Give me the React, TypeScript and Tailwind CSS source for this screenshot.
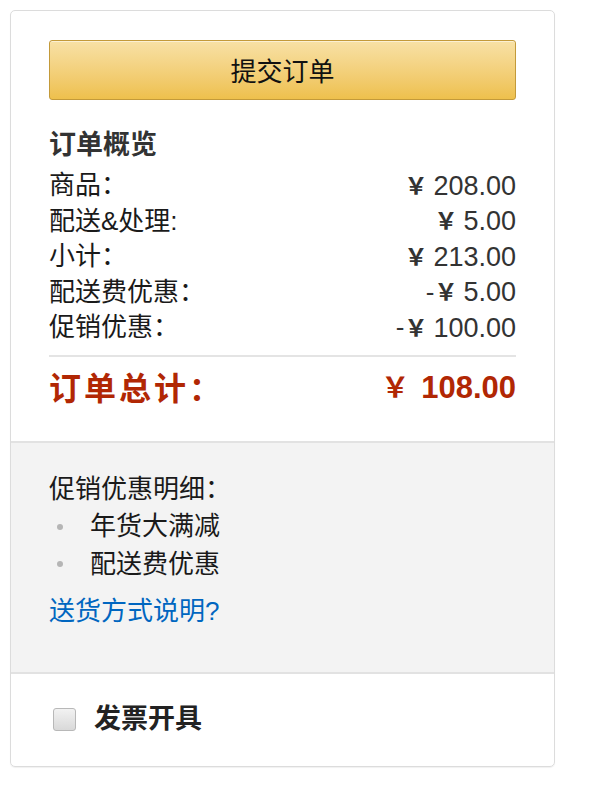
import React from "react";

interface SummaryRow {
  label: string;
  prefix: string;
  amount: string;
}

const rows: SummaryRow[] = [
  { label: "商品：", prefix: "", amount: "208.00" },
  { label: "配送&处理:", prefix: "", amount: "5.00" },
  { label: "小计：", prefix: "", amount: "213.00" },
  { label: "配送费优惠：", prefix: "-", amount: "5.00" },
  { label: "促销优惠：", prefix: "-", amount: "100.00" },
];

const promos = ["年货大满减", "配送费优惠"];

const font = "font-['Liberation_Sans','Noto_Sans_CJK_SC',sans-serif]";

const App = () => {
  return (
    <div className={`min-h-[785px] w-[600px] bg-white pl-[10px] pt-[10px] ${font}`}>
      <div className="w-[545px] overflow-hidden rounded-[5px] border border-[#dcdcdc] shadow-[0_1px_1px_rgba(0,0,0,0.06)]">
        {/* order summary */}
        <div className="border-b-2 border-[#e2e2e2] px-[38px] pt-[29px] pb-[32px]">
          <button className="flex h-[60px] w-full items-center justify-center rounded-[3px] border border-[#c39a3a] bg-gradient-to-b from-[#f8e1a5] to-[#eec04c] pt-[4px] text-[26px] text-[#111] shadow-[inset_0_1px_0_rgba(255,255,255,0.5)]">
            提交订单
          </button>

          <div className="mt-[27px] h-[36px] text-[27px] leading-[36px] font-bold text-[#333]">订单概览</div>

          <div className="mt-[5px]">
            {rows.map((row) => (
              <div key={row.label} className="flex h-[35.5px] items-center justify-between">
                <span className="text-[26px] text-[#1a1a1a]">{row.label}</span>
                <span className="flex items-center text-[#333]">
                  {row.prefix && <span className="text-[26px]">{row.prefix}</span>}
                  <span className="text-[23px] font-bold">￥</span>
                  <span className="ml-[6px] text-[27px]">{row.amount}</span>
                </span>
              </div>
            ))}
          </div>

          <div className="mt-[9px] h-[2px] bg-[#e4e4e4]" />

          <div className="mt-[12px] flex h-[40px] items-center justify-between text-[#b12704]">
            <span className="text-[32px] font-bold tracking-[3px]">订单总计：</span>
            <span className="flex items-center">
              <span className="text-[28px] font-bold">￥</span>
              <span className="ml-[12px] text-[31px] font-bold">108.00</span>
            </span>
          </div>
        </div>

        {/* promotion details */}
        <div className="border-b-2 border-[#e2e2e2] bg-[#f3f3f3] px-[38px] pt-[28px] pb-[41px] text-[26px]">
          <div className="h-[37.5px] leading-[37.5px] text-[#1a1a1a]">促销优惠明细：</div>
          <ul>
            {promos.map((p) => (
              <li key={p} className="flex h-[37.5px] items-center text-[#1a1a1a]">
                <span className="ml-[8px] h-[6px] w-[6px] rounded-full bg-[#b5b5b5]" />
                <span className="ml-[27px]">{p}</span>
              </li>
            ))}
          </ul>
          <a href="#" className="mt-[10px] block h-[37.5px] leading-[37.5px] text-[#0066c0]">
            送货方式说明?
          </a>
        </div>

        {/* invoice */}
        <div className="flex h-[92px] items-center pl-[42px]">
          <span className="h-[23px] w-[23px] rounded-[3px] border border-[#b8b8b8] bg-gradient-to-b from-[#f2f2f2] to-[#d9d9d9]" />
          <span className="ml-[18px] text-[27px] font-bold text-[#222]">发票开具</span>
        </div>
      </div>
    </div>
  );
};

export default App;
